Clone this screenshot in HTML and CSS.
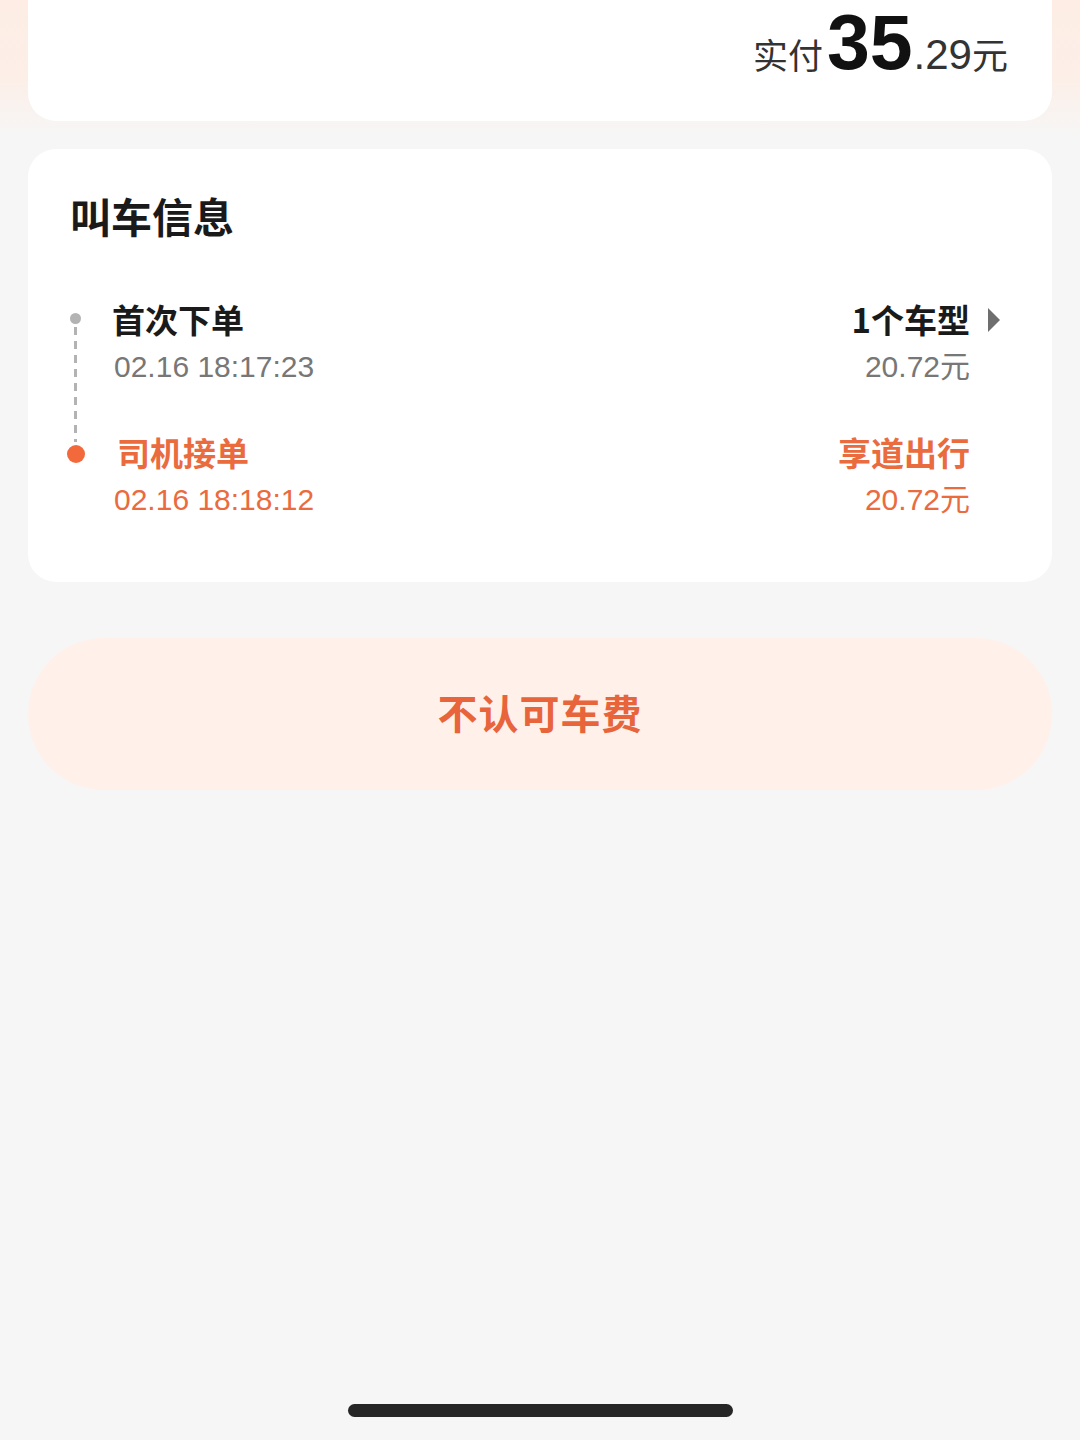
FILE: index.html
```html
<!DOCTYPE html>
<html lang="zh-CN">
<head>
  <meta charset="UTF-8">
  <meta name="viewport" content="width=device-width, initial-scale=1.0">
  <title>叫车信息</title>
  <link rel="stylesheet" href="styles.css">
</head>
<body>
  <div class="page">
    <div class="card pay-card">
      <div class="pay">
        <span class="pay-label">实付</span><span class="pay-int">35</span><span class="pay-dec">.29</span><span class="pay-unit">元</span>
      </div>
    </div>

    <div class="card info-card">
      <h2 class="info-title">叫车信息</h2>
      <div class="timeline">
        <div class="step">
          <div class="step-mark">
            <span class="dot dot-grey"></span>
            <span class="dash"></span>
          </div>
          <div class="step-left">
            <div class="step-name">首次下单</div>
            <div class="step-time">02.16 18:17:23</div>
          </div>
          <div class="step-right">
            <div class="step-name">1个车型</div>
            <div class="step-price">20.72元</div>
          </div>
          <span class="arrow"></span>
        </div>
        <div class="step step-active">
          <div class="step-mark">
            <span class="dot dot-orange"></span>
          </div>
          <div class="step-left">
            <div class="step-name">司机接单</div>
            <div class="step-time">02.16 18:18:12</div>
          </div>
          <div class="step-right">
            <div class="step-name">享道出行</div>
            <div class="step-price">20.72元</div>
          </div>
          <span class="arrow-space"></span>
        </div>
      </div>
    </div>

    <button class="reject-btn">不认可车费</button>
  </div>
  <div class="home-bar"></div>
</body>
</html>
```

FILE: styles.css
```css
* {
  margin: 0;
  padding: 0;
  box-sizing: border-box;
}

body {
  width: 1080px;
  height: 1440px;
  overflow: hidden;
  position: relative;
  font-family: "Liberation Sans", "Noto Sans CJK SC", sans-serif;
  background: linear-gradient(180deg, #fdede4 0px, #fcefe8 80px, #f6f6f6 135px, #f6f6f6 100%);
}

.page {
  padding: 0 28px;
}

.card {
  background: #fff;
  border-radius: 28px;
}

.pay-card {
  height: 121px;
  border-top-left-radius: 0;
  border-top-right-radius: 0;
  display: flex;
  justify-content: flex-end;
  padding-right: 44px;
}

.pay {
  margin-top: 3px;
  color: #333;
  display: flex;
  align-items: baseline;
  height: 78px;
}

.pay-label {
  font-family: "Noto Sans CJK SC", sans-serif;
  font-size: 35px;
  color: #333;
}

.pay-int {
  font-size: 77px;
  font-weight: bold;
  color: #111;
  line-height: 78px;
  margin-left: 4px;
}

.pay-dec {
  font-size: 42px;
  color: #333;
  margin-left: 1px;
}

.pay-unit {
  font-family: "Noto Sans CJK SC", sans-serif;
  font-size: 36px;
  color: #333;
}

.info-card {
  margin-top: 28px;
  height: 433px;
  padding: 34px 52px 0 42px;
}

.info-title {
  font-family: "Noto Sans CJK SC", sans-serif;
  font-size: 41px;
  font-weight: bold;
  color: #1a1a1a;
  line-height: 64px;
}

.timeline {
  margin-top: 50px;
}

.step {
  display: flex;
  height: 133px;
}

.step-mark {
  width: 42px;
  position: relative;
}

.dot {
  position: absolute;
  border-radius: 50%;
}

.dot-grey {
  width: 11px;
  height: 11px;
  left: 0;
  top: 16px;
  background: #b3b3b3;
}

.dot-orange {
  width: 18px;
  height: 18px;
  left: -3px;
  top: 15px;
  background: #f26a3b;
}

.dash {
  position: absolute;
  left: 4px;
  top: 30px;
  width: 3px;
  height: 115px;
  background: repeating-linear-gradient(180deg, #b3b3b3 0px, #b3b3b3 8px, transparent 8px, transparent 14px);
}

.step-left {
  flex: 1;
}

.step-right {
  text-align: right;
}

.step-name {
  font-family: "Noto Sans CJK SC", sans-serif;
  font-size: 33px;
  font-weight: bold;
  color: #1a1a1a;
  line-height: 44px;
}

.step-time,
.step-price {
  font-family: "Liberation Sans", "Noto Sans CJK SC", sans-serif;
  font-size: 30px;
  color: #777;
  line-height: 52px;
}

.step-time {
  padding-left: 2px;
}

.step-active .step-name,
.step-active .step-time,
.step-active .step-price {
  color: #ea6b3e;
}

.step-active .step-left .step-name {
  padding-left: 5px;
}

.arrow {
  width: 0;
  height: 0;
  margin: 11px 0 0 18px;
  border-top: 12px solid transparent;
  border-bottom: 12px solid transparent;
  border-left: 12px solid #6e6e6e;
}

.arrow-space {
  width: 30px;
}

.reject-btn {
  display: block;
  width: 100%;
  height: 152px;
  margin-top: 56px;
  padding-bottom: 4px;
  border: none;
  border-radius: 76px;
  background: #fff0ea;
  color: #e8643a;
  font-family: "Noto Sans CJK SC", sans-serif;
  font-size: 40px;
  font-weight: bold;
  letter-spacing: 1px;
}

.home-bar {
  position: absolute;
  left: 348px;
  top: 1404px;
  width: 385px;
  height: 13px;
  border-radius: 7px;
  background: #262626;
}
```
